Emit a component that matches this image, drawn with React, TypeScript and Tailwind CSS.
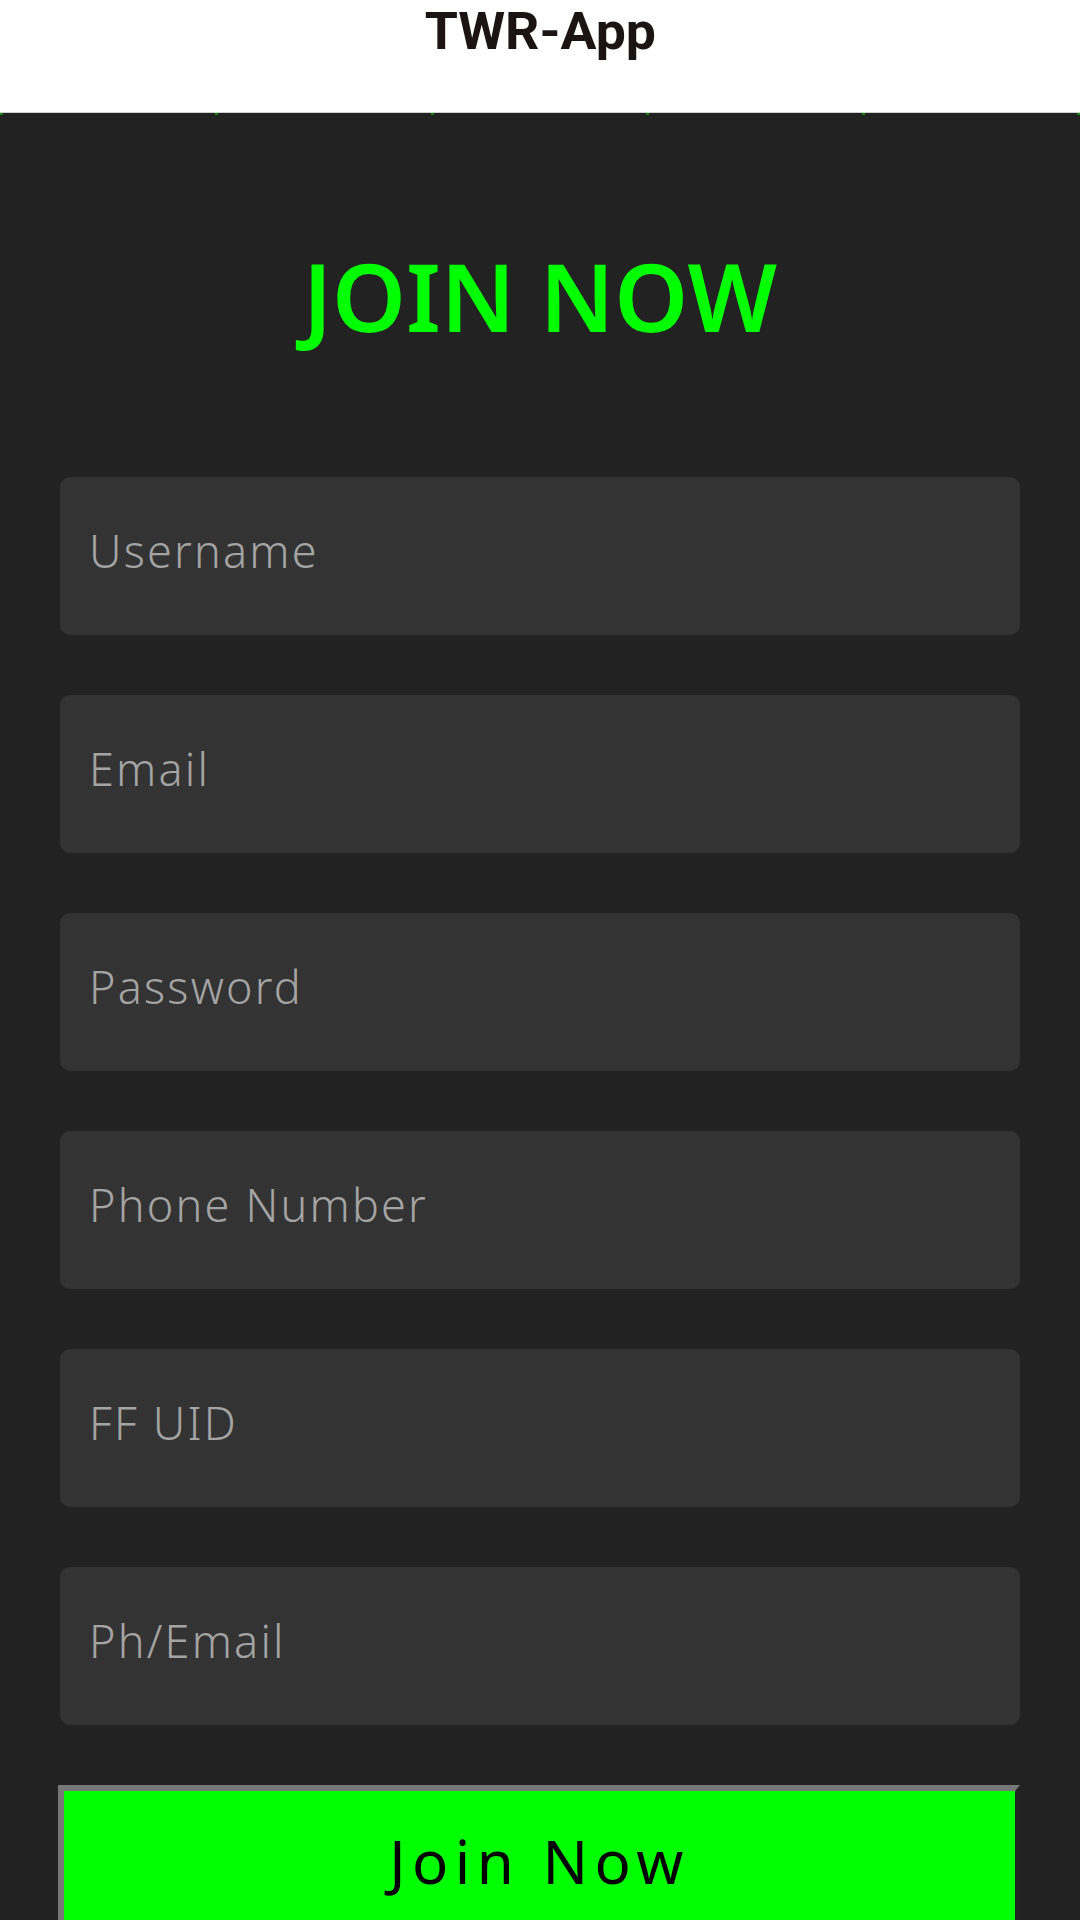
const fields = ["Username", "Email", "Password", "Phone Number", "FF UID", "Ph/Email"];

function Header() {
  return (
    <header className="flex h-[113px] justify-center border-b border-[#cfcfcf] bg-white pt-[6px]">
      <h1 className="inline-block h-fit scale-x-[1.03] font-['Roboto',sans-serif] text-[52px] font-bold leading-none text-[#1c1414]">
        TWR-App
      </h1>
    </header>
  );
}

function Dots() {
  return (
    <div className="flex h-[2px] justify-between">
      {[0, 1, 2, 3, 4, 5].map((i) => (
        <span key={i} className="h-[2px] w-[3px] bg-[#0b8a0b]" />
      ))}
    </div>
  );
}

export default function App() {
  return (
    <div className="min-h-screen bg-[#222222] font-['Noto_Sans',sans-serif]">
      <Header />
      <Dots />
      <h2 className="mt-[134px] text-center text-[94px] font-semibold leading-none text-[#00ff00]">
        JOIN NOW
      </h2>
      <form className="mt-[134px] flex flex-col gap-[60px] px-[60px]">
        {fields.map((f) => (
          <input
            key={f}
            type={f === "Password" ? "password" : "text"}
            placeholder={f}
            className="h-[158px] w-full rounded-[10px] bg-[#333333] pb-[12px] pl-[29px] text-[45px] font-light tracking-[2.2px] text-[#dddddd] outline-none placeholder:text-[#a4a4a4]"
          />
        ))}
        <button
          type="button"
          className="-ml-[2px] flex h-[146px] w-[calc(100%+2px)] items-center justify-center border-t-[6px] border-r-[5px] border-l-[6px] border-t-[#777777] border-r-[#242424] border-l-[#777777] bg-[#00ff00] text-[60px] leading-none tracking-[6.5px] text-black"
        >
          Join Now
        </button>
      </form>
    </div>
  );
}
